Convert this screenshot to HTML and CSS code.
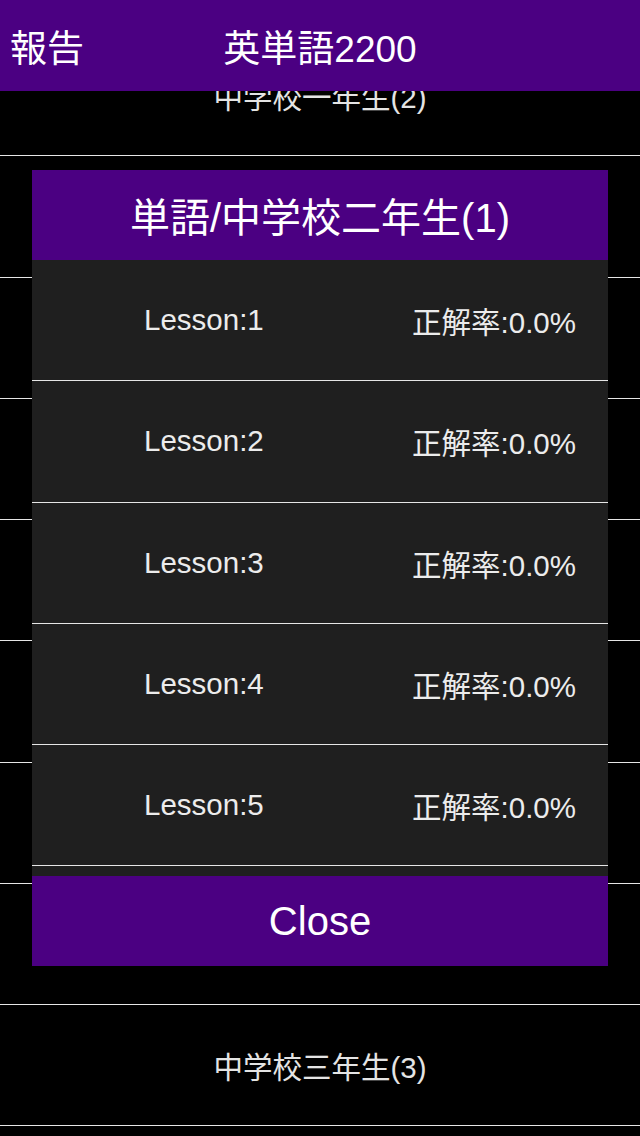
FILE: index.html
```html
<!DOCTYPE html>
<html lang="ja">
<head>
<meta charset="utf-8">
<title>英単語2200</title>
<link rel="stylesheet" href="styles.css">
</head>
<body>
<div class="screen">
  <ul class="list">
    <li class="list-row">中学校一年生(2)</li>
    <li class="list-row">中学校一年生(3)</li>
    <li class="list-row">中学校二年生(1)</li>
    <li class="list-row">中学校二年生(2)</li>
    <li class="list-row">中学校二年生(3)</li>
    <li class="list-row">中学校三年生(1)</li>
    <li class="list-row">中学校三年生(2)</li>
    <li class="list-row">中学校三年生(3)</li>
    <li class="list-row">中学校三年生(3)</li>
  </ul>

  <header class="navbar">
    <span class="nav-left">報告</span>
    <span class="nav-title">英単語2200</span>
    <span class="nav-right"></span>
  </header>

  <div class="modal">
    <div class="modal-header">単語/中学校二年生(1)</div>
    <ul class="lessons">
      <li class="lesson"><span>Lesson:1</span><span>正解率:0.0%</span></li>
      <li class="lesson"><span>Lesson:2</span><span>正解率:0.0%</span></li>
      <li class="lesson"><span>Lesson:3</span><span>正解率:0.0%</span></li>
      <li class="lesson"><span>Lesson:4</span><span>正解率:0.0%</span></li>
      <li class="lesson"><span>Lesson:5</span><span>正解率:0.0%</span></li>
      <li class="lesson"><span>Lesson:6</span><span>正解率:0.0%</span></li>
    </ul>
    <div class="modal-close">Close</div>
  </div>
</div>
</body>
</html>
```

FILE: styles.css
```css
* { box-sizing: border-box; }

html, body {
  margin: 0;
  padding: 0;
  background: #000;
}

body {
  font-family: "Liberation Sans", "Noto Sans CJK JP", sans-serif;
  color: #fff;
}

.screen {
  position: relative;
  width: 640px;
  height: 1136px;
  overflow: hidden;
  background: #000;
}

.list {
  list-style: none;
  margin: 0;
  padding: 35px 0 0 0;
}

.list-row {
  height: 121.25px;
  border-bottom: 1px solid #e6e6e6;
  display: flex;
  align-items: center;
  justify-content: center;
  font-size: 29.5px;
  color: #e4e4e4;
}

.navbar {
  position: absolute;
  top: 0;
  left: 0;
  width: 640px;
  height: 91px;
  background: #4b0082;
  display: grid;
  grid-template-columns: 1fr auto 1fr;
  align-items: center;
  padding: 0 10px;
  font-size: 37px;
  color: #fff;
}

.nav-title {
  text-align: center;
}

.modal {
  position: absolute;
  top: 170px;
  left: 32px;
  width: 576px;
  display: flex;
  flex-direction: column;
}

.modal-header {
  height: 90px;
  background: #4b0082;
  display: flex;
  align-items: center;
  justify-content: center;
  font-size: 40px;
  color: #fff;
}

.lessons {
  list-style: none;
  margin: 0;
  padding: 0;
  height: 616px;
  overflow: hidden;
  background: #1f1f1f;
}

.lesson {
  height: 121.25px;
  border-bottom: 1px solid #e6e6e6;
  display: flex;
  align-items: center;
  justify-content: space-between;
  padding: 0 32px 0 112px;
  font-size: 29.5px;
  color: #ececec;
}

.modal-close {
  height: 90px;
  background: #4b0082;
  display: flex;
  align-items: center;
  justify-content: center;
  font-size: 40px;
  color: #fff;
}
```
